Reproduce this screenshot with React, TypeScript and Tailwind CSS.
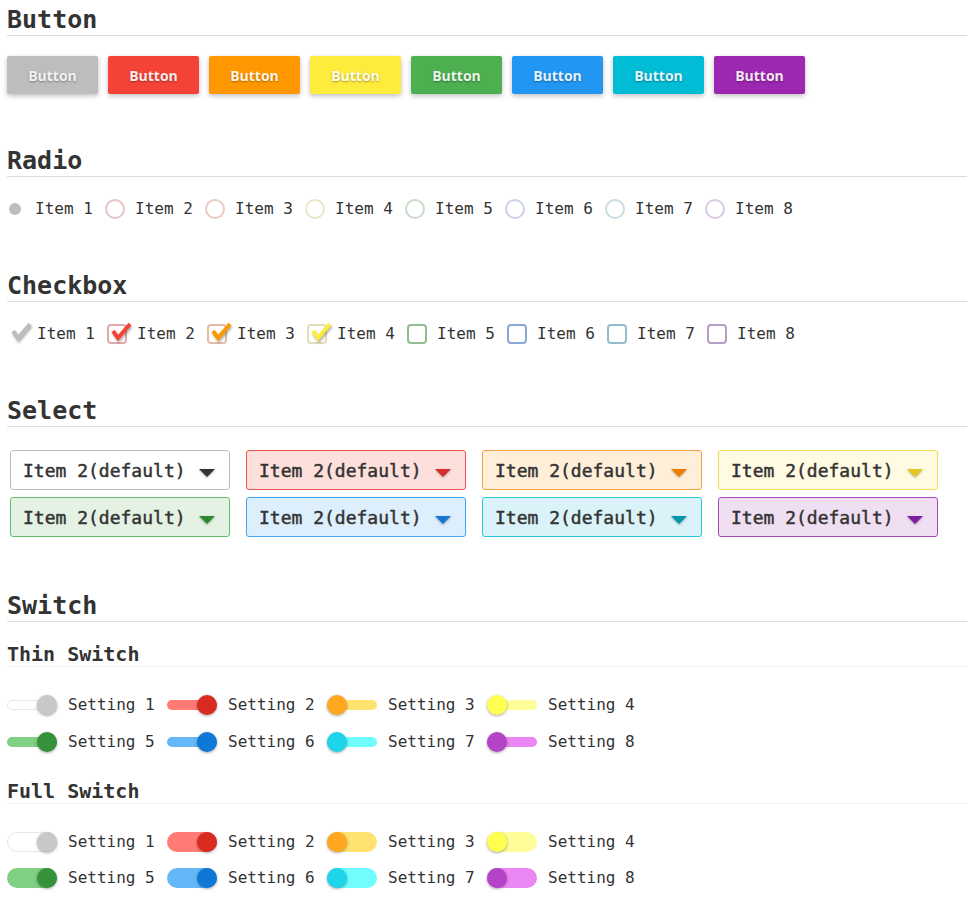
const mono = "font-['DejaVu_Sans_Mono','Liberation_Mono',monospace]"

const BUTTONS = [
  'bg-[#bdbdbd] text-[#f2f2f2]',
  'bg-[#f44336] text-[#fbe9e7]',
  'bg-[#ff9800] text-[#fff3e0]',
  'bg-[#ffeb3b] text-[#fffde7]',
  'bg-[#4caf50] text-[#e8f5e9]',
  'bg-[#2196f3] text-[#e3f2fd]',
  'bg-[#00bcd4] text-[#e0f7fa]',
  'bg-[#9c27b0] text-[#f3e5f5]',
]

const RADIO_RINGS = [
  'border-[#e6c3c3]',
  'border-[#ebcac2]',
  'border-[#ebe6c6]',
  'border-[#c8dcc8]',
  'border-[#c8d3eb]',
  'border-[#c8dce1]',
  'border-[#dbc9e2]',
]

const CHECKED = [
  { box: 'border-transparent', stroke: '#bdbdbd' },
  { box: 'border-[#e0aaaa]', stroke: '#f44336' },
  { box: 'border-[#e2bba9]', stroke: '#ff9800' },
  { box: 'border-[#e2ddb6]', stroke: '#ffeb3b' },
]

const UNCHECKED = [
  'border-[#92bc92]',
  'border-[#8ca8d8]',
  'border-[#94bccb]',
  'border-[#b69dc4]',
]

const SELECTS = [
  { box: 'bg-white border-[#bdbdbd]', arrow: '#333333' },
  { box: 'bg-[#fde0dc] border-[#ef5350]', arrow: '#d32f2f' },
  { box: 'bg-[#ffefd9] border-[#f4a13e]', arrow: '#ef7c00' },
  { box: 'bg-[#fffbe2] border-[#f2df4f]', arrow: '#e2c81d' },
  { box: 'bg-[#e4f2e4] border-[#66bb6a]', arrow: '#2e8b2e' },
  { box: 'bg-[#ddeffc] border-[#42a5f5]', arrow: '#1976d2' },
  { box: 'bg-[#d9f3f8] border-[#26c6da]', arrow: '#0097a7' },
  { box: 'bg-[#f0dff2] border-[#ab47bc]', arrow: '#7b1fa2' },
]

const SWITCHES = [
  { on: true, track: 'bg-white border border-[#e6e6e6]', knob: 'bg-[#c8c8c8]' },
  { on: true, track: 'bg-[#ff7b74]', knob: 'bg-[#d92b20]' },
  { on: false, track: 'bg-[#ffe270]', knob: 'bg-[#ffa81f]' },
  { on: false, track: 'bg-[#fdfd99]', knob: 'bg-[#ffff52]' },
  { on: true, track: 'bg-[#80cf82]', knob: 'bg-[#35913a]' },
  { on: true, track: 'bg-[#64b8f8]', knob: 'bg-[#0f78d6]' },
  { on: false, track: 'bg-[#70fdfd]', knob: 'bg-[#1cd5ea]' },
  { on: false, track: 'bg-[#ea87f4]', knob: 'bg-[#b443c8]' },
]

function Heading({ children }: { children: string }) {
  return (
    <h2 className="pt-[5px] text-[25px] leading-[30px] font-bold text-[#333] border-b border-[#dcdcdc]">
      {children}
    </h2>
  )
}

function SubHeading({ children }: { children: string }) {
  return (
    <h3 className="text-[20px] leading-[24px] font-bold text-[#333] border-b border-[#f0f0f0]">
      {children}
    </h3>
  )
}

function Check({ color }: { color: string }) {
  return (
    <svg
      className="absolute left-0 top-[-4px] overflow-visible [filter:drop-shadow(1px_2px_1px_rgba(0,0,0,0.3))]"
      width="28"
      height="24"
      viewBox="0 0 28 24"
    >
      <path d="M6 11 L11 18 L23 4" fill="none" stroke={color} strokeWidth={4} strokeLinejoin="miter" />
    </svg>
  )
}

function Switch({ thin, on, track, knob }: { thin: boolean; on: boolean; track: string; knob: string }) {
  return (
    <div className="relative w-[50px] h-5 flex items-center shrink-0">
      <div className={`w-full rounded-full ${thin ? 'h-[10px]' : 'h-5'} ${track}`} />
      <div
        className={`absolute top-0 w-5 h-5 rounded-full shadow-[0_1px_3px_rgba(0,0,0,0.35)] ${
          on ? 'right-0' : 'left-0'
        } ${knob}`}
      />
    </div>
  )
}

function SwitchGrid({ thin }: { thin: boolean }) {
  return (
    <div className={`pl-[7px] grid grid-cols-[repeat(4,160px)] ${thin ? 'gap-y-[17px]' : 'gap-y-4'}`}>
      {SWITCHES.map((s, i) => (
        <div key={i} className="flex items-center h-5">
          <Switch thin={thin} on={s.on} track={s.track} knob={s.knob} />
          <span className="ml-[11px] text-[16px] text-[#333]">Setting {i + 1}</span>
        </div>
      ))}
    </div>
  )
}

export default function App() {
  return (
    <div className={`${mono} bg-white min-h-screen px-[7px] pb-4`}>
      {/* Button */}
      <Heading>Button</Heading>
      <div className="mt-5 flex gap-[10px]">
        {BUTTONS.map((cls, i) => (
          <button
            key={i}
            className={`w-[91px] h-[38px] rounded-[2px] font-['Open_Sans',sans-serif] font-bold text-[14px] shadow-[0_2px_5px_rgba(0,0,0,0.25)] [text-shadow:0_1px_2px_rgba(0,0,0,0.35)] ${cls}`}
          >
            Button
          </button>
        ))}
      </div>

      {/* Radio */}
      <div className="mt-[47px]">
        <Heading>Radio</Heading>
      </div>
      <div className="mt-[22px] flex -ml-[2px]">
        <div className="w-[100px] flex items-center h-5">
          <span className="w-5 h-5 flex items-center justify-center">
            <span className="w-3 h-3 rounded-full bg-[#bdbdbd]" />
          </span>
          <span className="ml-[10px] text-[16px] text-[#333]">Item 1</span>
        </div>
        {RADIO_RINGS.map((ring, i) => (
          <div key={i} className="w-[100px] flex items-center h-5">
            <span className={`w-5 h-5 rounded-full border-2 ${ring}`} />
            <span className="ml-[10px] text-[16px] text-[#333]">Item {i + 2}</span>
          </div>
        ))}
      </div>

      {/* Checkbox */}
      <div className="mt-[47px]">
        <Heading>Checkbox</Heading>
      </div>
      <div className="mt-[22px] flex">
        {CHECKED.map((c, i) => (
          <div key={i} className="w-[100px] flex items-center h-5">
            <span className="relative w-5 h-5">
              <span className={`absolute inset-0 rounded-[4px] border-2 ${c.box}`} />
              <Check color={c.stroke} />
            </span>
            <span className="ml-[10px] text-[16px] text-[#333]">Item {i + 1}</span>
          </div>
        ))}
        {UNCHECKED.map((b, i) => (
          <div key={i} className="w-[100px] flex items-center h-5">
            <span className={`w-5 h-5 rounded-[4px] border-2 ${b}`} />
            <span className="ml-[10px] text-[16px] text-[#333]">Item {i + 5}</span>
          </div>
        ))}
      </div>

      {/* Select */}
      <div className="mt-[47px]">
        <Heading>Select</Heading>
      </div>
      <div className="mt-[23px] pl-[3px] grid grid-cols-[repeat(4,220px)] gap-x-4 gap-y-[7px]">
        {SELECTS.map((s, i) => (
          <div key={i} className={`h-10 rounded-[3px] border flex items-center pl-3 pr-[14px] ${s.box}`}>
            <span className="text-[18px] text-[#333] [-webkit-text-stroke:0.45px_#333]">Item 2(default)</span>
            <svg
              className="ml-auto mt-[6px] [filter:drop-shadow(0_1px_1px_rgba(0,0,0,0.3))]"
              width="16"
              height="8"
              viewBox="0 0 16 8"
            >
              <polygon points="0,0 16,0 8,8" fill={s.arrow} />
            </svg>
          </div>
        ))}
      </div>

      {/* Switch */}
      <div className="mt-[49px]">
        <Heading>Switch</Heading>
      </div>
      <div className="mt-5">
        <SubHeading>Thin Switch</SubHeading>
      </div>
      <div className="mt-[28px] -mx-[7px]">
        <SwitchGrid thin />
      </div>
      <div className="mt-[27px]">
        <SubHeading>Full Switch</SubHeading>
      </div>
      <div className="mt-[28px] -mx-[7px]">
        <SwitchGrid thin={false} />
      </div>
    </div>
  )
}
